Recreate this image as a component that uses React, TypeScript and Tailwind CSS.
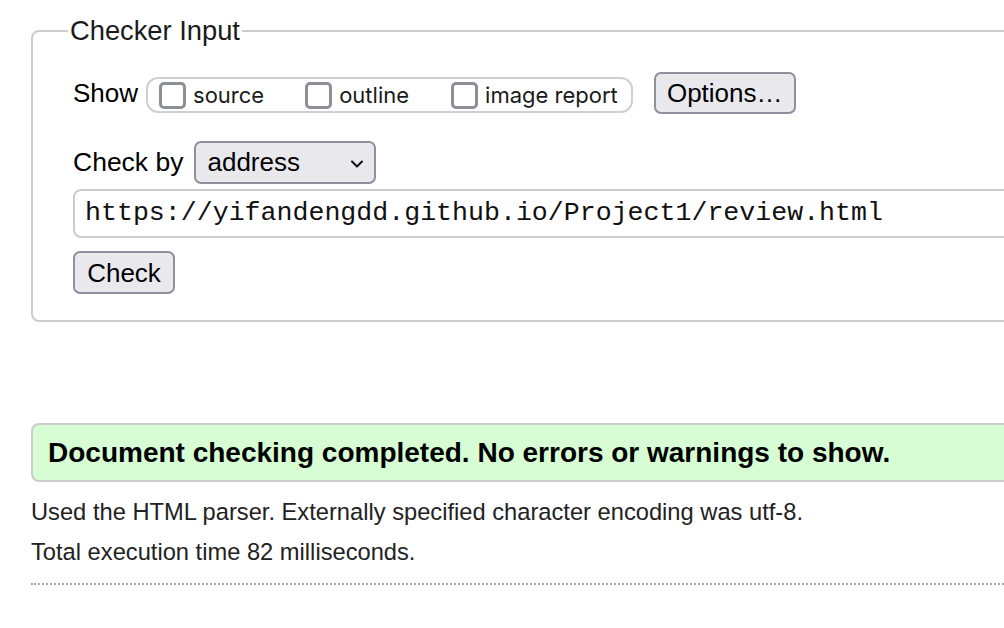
import React from "react";

const sans = "font-['Liberation_Sans',Arial,sans-serif]";

function Box({ label }: { label: string }) {
  return (
    <label className="flex items-center">
      <span className="w-[27px] h-[27px] rounded-[5px] border-[3px] border-[#8e8e96] bg-white" />
      <span className="ml-[7px] text-[22px] font-['Inter',sans-serif] text-[#1a1a1a]">
        {label}
      </span>
    </label>
  );
}

export default function App() {
  return (
    <div className={`w-screen h-screen overflow-hidden bg-white ${sans} text-black`}>
      <div className="pl-[31px] pt-[16px] w-[1100px]">
        {/* Checker input */}
        <fieldset className="border-2 border-[#cccccc] rounded-lg pl-[40px] pb-[26px]">
          <legend className="-ml-[5px] px-[2px] text-[27.3px] leading-[30px] text-[#1a1a1a]">
            Checker Input
          </legend>

          <div className="flex items-center mt-[26px]">
            <span className="text-[26px] mr-[8px]">Show</span>
            <div className="flex items-center h-[36px] mt-[4px] border-2 border-[#d0d0d0] rounded-[12px] pl-[11px] pr-[13px]">
              <Box label="source" />
              <div className="w-[41px]" />
              <Box label="outline" />
              <div className="w-[42px]" />
              <Box label="image report" />
            </div>
            <button className="ml-[21px] h-[42px] w-[142px] rounded-[7px] border-2 border-[#8f8f9d] bg-[#e9e9ed] text-[26px] leading-none">
              Options…
            </button>
          </div>

          <div className="flex items-center mt-[27px]">
            <span className="text-[26.5px] mr-[11px]">Check by</span>
            <div className="flex items-center justify-between w-[182px] h-[43px] pl-[11px] pr-[10px] rounded-[7px] border-2 border-[#8f8f9d] bg-[#e9e9ed]">
              <span className="text-[26px]">address</span>
              <svg width="14" height="10" viewBox="0 0 14 10" className="mt-[2px]">
                <path d="M2 2.5 L7 7.5 L12 2.5" fill="none" stroke="#111" strokeWidth="2" strokeLinecap="round" strokeLinejoin="round" />
              </svg>
            </div>
          </div>

          <div className="mt-[5px] h-[49px] flex items-center border-2 border-[#cccccc] rounded-lg pl-[10px] font-['Liberation_Mono',monospace] text-[26.6px] text-[#111]">
            https://yifandengdd.github.io/Project1/review.html
          </div>

          <button className="mt-[13px] h-[43px] w-[102px] rounded-[7px] border-2 border-[#8f8f9d] bg-[#e9e9ed] text-[26px] leading-none">
            Check
          </button>
        </fieldset>

        {/* Result */}
        <div className="mt-[101px] h-[59px] flex items-center pl-[15px] border-2 border-[#cccccc] rounded-lg bg-[#d6fdd3]">
          <span className="text-[28px] font-bold">
            Document checking completed. No errors or warnings to show.
          </span>
        </div>

        <p className="mt-[16px] text-[23.7px] leading-[28px] text-[#222]">
          Used the HTML parser. Externally specified character encoding was utf-8.
        </p>
        <p className="mt-[12px] text-[23.7px] leading-[28px] text-[#222]">
          Total execution time 82 milliseconds.
        </p>
        <div className="mt-[17px] border-t-2 border-dotted border-[#a8a8a8]" />
      </div>
    </div>
  );
}
